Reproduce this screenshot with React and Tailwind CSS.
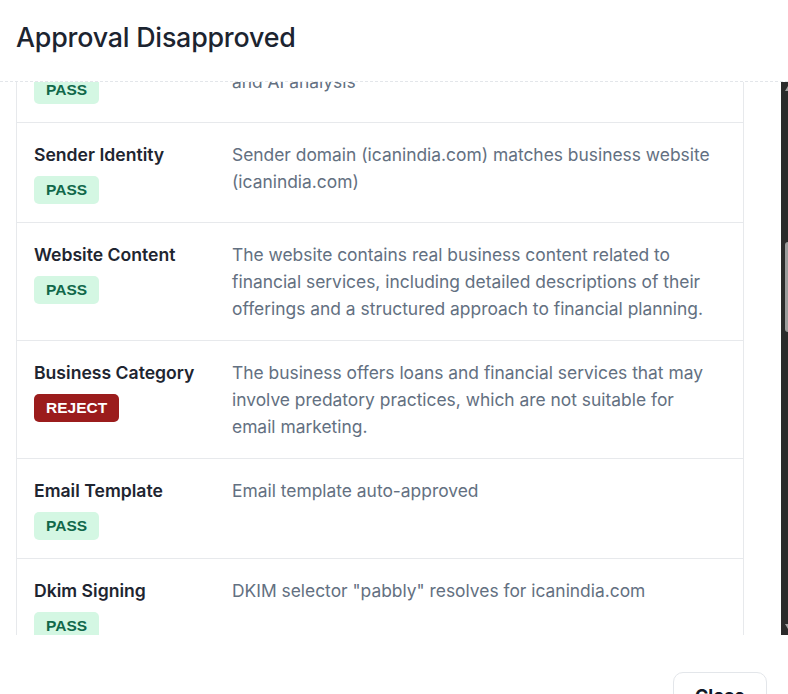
const rows = [
  {
    label: "Content Review",
    status: "PASS",
    text: (
      <>
        Message content checked for spam signals by rules
        <br />
        and AI analysis
      </>
    ),
  },
  {
    label: "Sender Identity",
    status: "PASS",
    text: "Sender domain (icanindia.com) matches business website (icanindia.com)",
  },
  {
    label: "Website Content",
    status: "PASS",
    text: "The website contains real business content related to financial services, including detailed descriptions of their offerings and a structured approach to financial planning.",
  },
  {
    label: "Business Category",
    status: "REJECT",
    text: "The business offers loans and financial services that may involve predatory practices, which are not suitable for email marketing.",
  },
  {
    label: "Email Template",
    status: "PASS",
    text: "Email template auto-approved",
  },
  {
    label: "Dkim Signing",
    status: "PASS",
    text: 'DKIM selector "pabbly" resolves for icanindia.com',
  },
];

const Badge = ({ status }) => {
  const pass = status === "PASS";
  return (
    <span
      className={
        pass
          ? "inline-flex h-[28px] items-center rounded-[5px] bg-[#d4f7e3] px-[12px] font-['Liberation_Sans',Arial,sans-serif] text-[15.5px] font-bold text-[#11684a]"
          : "inline-flex h-[28px] items-center rounded-[5px] bg-[#9b1c1c] px-[12px] font-['Liberation_Sans',Arial,sans-serif] text-[15.5px] font-bold text-white"
      }
    >
      {status}
    </span>
  );
};

const Row = ({ label, status, text }) => {
  return (
    <div className="flex border-b border-[#e7e9ec] py-[18px]">
      <div className="flex w-[215px] shrink-0 flex-col items-start gap-[8px] pl-[17px]">
        <div className="text-[17.6px] font-semibold leading-[27px] text-[#1e2530]">{label}</div>
        <Badge status={status} />
      </div>
      <div className="flex-1 pr-[22px] text-[17.4px] leading-[27px] text-[#637081]">{text}</div>
    </div>
  );
};

export default function App() {
  return (
    <div className="flex h-screen flex-col overflow-hidden bg-white font-['Inter','Noto_Sans',sans-serif]">
      {/* Header */}
      <div className="h-[82px] shrink-0 border-b border-dashed border-[#e3e6ea] px-4 pt-[21px]">
        <h1 className="text-[26.8px] font-medium leading-[32px] tracking-[-0.2px] text-[#1c2430]">
          Approval Disapproved
        </h1>
      </div>

      {/* Body */}
      <div className="flex h-[553px] shrink-0">
        <div className="flex-1 overflow-hidden pl-4 pr-[37px]">
          <div className="-mt-[59px] border-x border-[#e7e9ec]">
            {rows.map((r) => (
              <Row key={r.label} {...r} />
            ))}
          </div>
        </div>
        {/* scrollbar strip */}
        <div className="flex w-[7px] shrink-0 flex-col items-end bg-[#2b2b2b]">
          <div className="mt-[4px] h-0 w-0 border-b-[5px] border-l-[3px] border-b-[#a3a3a3] border-l-transparent" />
          <div className="mt-[151px] h-[90px] w-[3px] rounded-l-[3px] bg-[#9c9c9c]" />
          <div className="flex-1" />
          <div className="mb-[6px] h-0 w-0 border-t-[5px] border-l-[3px] border-t-[#a3a3a3] border-l-transparent" />
        </div>
      </div>

      {/* Footer */}
      <div className="flex shrink-0 justify-end pr-[21px] pt-[37px]">
        <button className="h-[46px] rounded-[10px] border border-[#e3e6ea] px-[21px] text-[18px] font-bold text-[#111827]">
          Close
        </button>
      </div>
    </div>
  );
}
